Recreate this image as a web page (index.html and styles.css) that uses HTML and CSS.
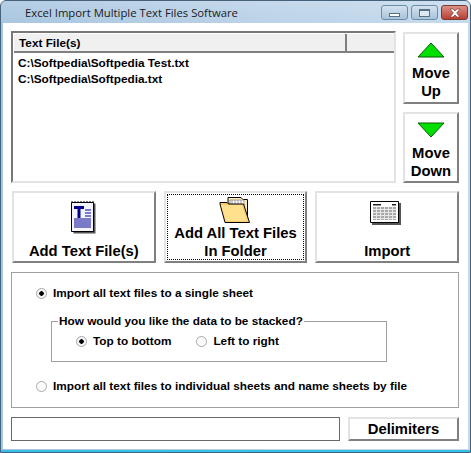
FILE: index.html
```html
<!DOCTYPE html>
<html lang="en">
<head>
    <meta charset="UTF-8">
    <title>Excel Import Multiple Text Files Software</title>
    <link rel="stylesheet" href="styles.css">
</head>
<body>
    <div class="window">
        <div class="titlebar">
            <span class="title">Excel Import Multiple Text Files Software</span>
            <div class="controls">
                <span class="control"><i class="glyph-min"></i></span>
                <span class="control"><i class="glyph-max"></i></span>
                <span class="control close">
                    <svg width="14" height="10" viewBox="0 0 14 10"><path d="M2 1h3l2 2 2-2h3l-3.300 4 3.300 4H9L7 7 5 9H2l3.300-4z" fill="#fff" stroke="#6b2a22" stroke-width=".6"/></svg>
                </span>
            </div>
        </div>

        <div class="client">
            <div class="top-row">
                <div class="listbox">
                    <div class="list-header">
                        <span class="col-main">Text File(s)</span>
                        <span class="col-rest"></span>
                    </div>
                    <div class="list-row">C:\Softpedia\Softpedia Test.txt</div>
                    <div class="list-row">C:\Softpedia\Softpedia.txt</div>
                </div>
                <div class="side-buttons">
                    <button class="button move">
                        <svg width="28" height="16" viewBox="0 0 28 16"><path d="M14 1 27 15H1z" fill="#00e000" stroke="#0a5a0a"/></svg>
                        <span>Move<br>Up</span>
                    </button>
                    <button class="button move">
                        <svg width="28" height="16" viewBox="0 0 28 16"><path d="M1 1h26L14 15z" fill="#00e000" stroke="#0a5a0a"/></svg>
                        <span>Move<br>Down</span>
                    </button>
                </div>
            </div>

            <div class="action-row">
                <button class="button action">
                    <svg class="icon" width="28" height="33" viewBox="0 0 28 33">
                        <path d="M3.500 2.500h22v30h-22z" fill="#555"/>
                        <path d="M1.500 1.500h22v29h-22z" fill="#f4f4ff" stroke="#000"/>
                        <path d="M2 1v-1M5 1v-1M8 1v-1M11 1v-1M14 1v-1M17 1v-1M20 1v-1M23 1v-1" stroke="#000"/>
                        <path d="M4 5h10v3h-3.500v9h-3V8H4z" fill="#000090"/>
                        <path d="M15 9h6M15 12h6M15 15h6M4 18h17M4 20h17M4 22h17M4 24h17M4 26h17" stroke="#000090" stroke-width="1.200"/>
                    </svg>
                    <span class="label">Add Text File(s)</span>
                </button>
                <button class="button action focused">
                    <svg class="icon folder" width="33" height="27" viewBox="0 0 33 27">
                        <path d="M9 4V1.500h13l2 2h4.500v18h-19z" fill="#fbe9b0" stroke="#000"/>
                        <path d="M11 4h14v14H11zM13 4v14M16 4v14M19 4v14M22 4v14" fill="#fff" stroke="#888" stroke-width=".8"/>
                        <path d="M1 8V6.500h7l1.500 1.500h15l6 18.500H6z" fill="#fdc96f" stroke="#000"/>
                        <path d="M2 9h21l5 16H7z" fill="#ffe08c"/>
                    </svg>
                    <span class="label">Add All Text Files<br>In Folder</span>
                </button>
                <button class="button action">
                    <svg class="icon sheet" width="31" height="24" viewBox="0 0 31 24">
                        <path d="M2 2h29v22H2z" fill="#555"/>
                        <path d="M.5.500h28v21H.500z" fill="#fff" stroke="#000"/>
                        <path d="M3 3h8v1.500H3zM22 3h4v1.500h-4z" fill="#222"/>
                        <path d="M3 6h23v13H3z" fill="#a8a8a8"/>
                        <path d="M3 8.500h23M3 11.500h23M3 14.500h23M3 17.500h23M6.500 6v13M10.500 6v13M14.500 6v13M18.500 6v13M22.500 6v13" stroke="#e8e8e8"/>
                    </svg>
                    <span class="label">Import</span>
                </button>
            </div>

            <div class="group">
                <label class="option"><input type="radio" name="mode" checked> Import all text files to a single sheet</label>
                <fieldset class="stack">
                    <legend>How would you like the data to be stacked?</legend>
                    <div class="stack-options">
                        <label class="option"><input type="radio" name="stack" checked> Top to bottom</label>
                        <label class="option"><input type="radio" name="stack"> Left to right</label>
                    </div>
                </fieldset>
                <label class="option"><input type="radio" name="mode"> Import all text files to individual sheets and name sheets by file</label>
            </div>

            <div class="bottom-row">
                <div class="textbox"></div>
                <button class="button delimiters">Delimiters</button>
            </div>
        </div>
    </div>
</body>
</html>
```

FILE: styles.css
```css
* {
    margin: 0;
    padding: 0;
    box-sizing: border-box;
}

body {
    width: 471px;
    height: 453px;
    background: #fff;
    font-family: "Liberation Sans", Arial, sans-serif;
    color: #000;
    overflow: hidden;
}

.window {
    display: flex;
    flex-direction: column;
    height: 453px;
    border: 1px solid #45627a;
    border-radius: 6px 6px 0 0;
    background: linear-gradient(90deg, #a9c6e0, #bcd3e8 60%, #c6dbee);
    box-shadow: inset 0 -2px 0 #35c0e8;
}

.titlebar {
    display: flex;
    justify-content: space-between;
    height: 22px;
    padding: 4px 2px 0 24px;
    background: linear-gradient(180deg, rgba(255, 255, 255, 0.15), rgba(255, 255, 255, 0));
}

.title {
    font-family: "Open Sans", sans-serif;
    font-size: 11.3px;
    line-height: 15px;
    color: #1a1a1a;
}

.controls {
    display: flex;
    gap: 3px;
}

.control {
    display: flex;
    align-items: center;
    justify-content: center;
    width: 27px;
    height: 15px;
    border: 1px solid #6f8ca6;
    border-radius: 3px;
    background: linear-gradient(180deg, #d2e2f0, #a9c3db);
}

.control.close {
    border-color: #7a3a30;
    background: linear-gradient(180deg, #dd9088, #b8402f);
}

.glyph-min {
    display: block;
    width: 11px;
    height: 4px;
    margin-top: 4px;
    border: 1px solid #5a6f82;
    background: #fff;
}

.glyph-max {
    display: block;
    width: 11px;
    height: 8px;
    border: 1px solid #5a6f82;
    box-shadow: inset 0 1px 0 #5a6f82;
    background: #dce8f2;
}

.client {
    display: flex;
    flex-direction: column;
    flex: 1;
    margin: 0 2px 3px 2px;
    padding: 8px 9px 0 8px;
    background: #fff;
}

.button {
    border: 2px solid;
    border-color: #e3e3e3 #808080 #808080 #e3e3e3;
    background: #fff;
    font-family: inherit;
    font-size: 14.8px;
    font-weight: bold;
    line-height: 18px;
    color: #000;
}

.top-row {
    display: flex;
    gap: 7px;
    height: 152px;
}

.listbox {
    width: 385px;
    border: 2px solid;
    border-color: #777 #e3e3e3 #e3e3e3 #777;
    font-size: 11.8px;
    font-weight: bold;
}

.list-header {
    display: flex;
    height: 19px;
    margin: 1px 0 2px 1px;
    background: #f0f0f0;
    border-bottom: 2px solid #808080;
}

.col-main {
    width: 333px;
    padding: 1px 0 0 5px;
    line-height: 16px;
    border-right: 2px solid #808080;
}

.col-rest {
    flex: 1;
}

.list-row {
    padding-left: 5px;
    height: 16px;
    line-height: 16px;
}

.side-buttons {
    display: flex;
    flex-direction: column;
    gap: 8px;
    width: 56px;
    padding-top: 1px;
}

.move {
    display: flex;
    flex-direction: column;
    align-items: center;
    flex: 1;
    padding-top: 8px;
}

.move span {
    margin-top: 6px;
}

.action-row {
    display: flex;
    gap: 8px;
    margin-top: 8px;
    padding-left: 1px;
}

.action {
    display: flex;
    flex-direction: column;
    align-items: center;
    flex: 1;
    height: 72px;
    padding-top: 8px;
}

.action .folder {
    margin-top: -5px;
}

.action .sheet {
    margin-right: 4px;
}

.label {
    margin-top: auto;
    margin-bottom: 1px;
}

.focused {
    outline: 1px dotted #000;
    outline-offset: -4px;
}

.group {
    display: flex;
    flex-direction: column;
    height: 136px;
    margin-top: 9px;
    padding: 13px 0 0 24px;
    border: 1px solid #a0a0a0;
}

.option {
    display: flex;
    align-items: center;
    gap: 6px;
    height: 14px;
    font-size: 11.8px;
    font-weight: bold;
}

.option input {
    appearance: none;
    width: 11px;
    height: 11px;
    border: 1px solid #a8a8a8;
    border-radius: 50%;
    background: #fbfbfb;
}

.option input:checked {
    background: radial-gradient(circle, #000 0 2px, #f4f4f4 2.500px);
}

.stack {
    width: 336px;
    height: 48px;
    margin: 14px 0 17px 15px;
    padding: 0;
    border: 1px solid #a0a0a0;
}

.stack legend {
    margin-left: 6px;
    padding: 0 1px;
    font-size: 11.8px;
    font-weight: bold;
    line-height: 14px;
}

.stack-options {
    display: flex;
    gap: 25px;
    padding: 6px 0 0 24px;
}

.bottom-row {
    display: flex;
    gap: 8px;
    height: 24px;
    margin-top: 9px;
}

.textbox {
    width: 329px;
    border: 1px solid #696969;
    background: #fff;
}

.delimiters {
    flex: 1;
}
```
